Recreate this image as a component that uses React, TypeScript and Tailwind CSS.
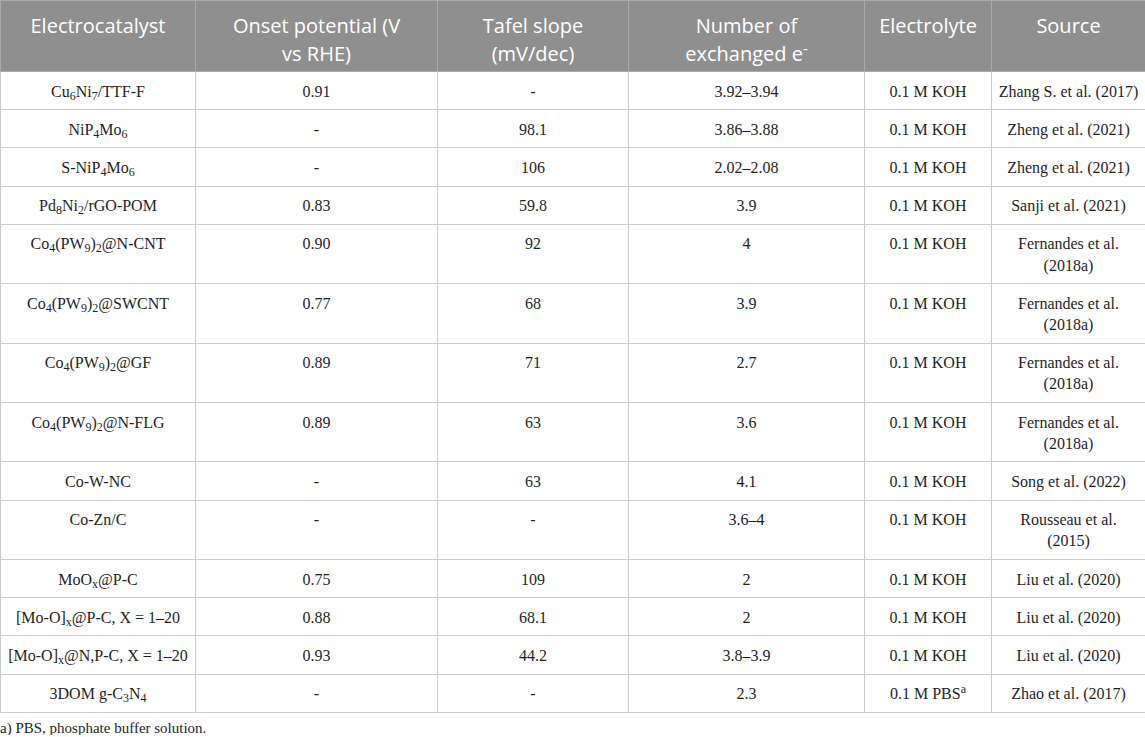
import React from "react";

type Row = {
  cat: React.ReactNode;
  onset: string;
  tafel: string;
  electrons: string;
  electrolyte: React.ReactNode;
  source: React.ReactNode;
};

const fernandes = (
  <>
    Fernandes et al.
    <br />
    (2018a)
  </>
);

const rows: Row[] = [
  { cat: <>Cu<sub>6</sub>Ni<sub>7</sub>/TTF-F</>, onset: "0.91", tafel: "-", electrons: "3.92–3.94", electrolyte: "0.1 M KOH", source: "Zhang S. et al. (2017)" },
  { cat: <>NiP<sub>4</sub>Mo<sub>6</sub></>, onset: "-", tafel: "98.1", electrons: "3.86–3.88", electrolyte: "0.1 M KOH", source: "Zheng et al. (2021)" },
  { cat: <>S-NiP<sub>4</sub>Mo<sub>6</sub></>, onset: "-", tafel: "106", electrons: "2.02–2.08", electrolyte: "0.1 M KOH", source: "Zheng et al. (2021)" },
  { cat: <>Pd<sub>8</sub>Ni<sub>2</sub>/rGO-POM</>, onset: "0.83", tafel: "59.8", electrons: "3.9", electrolyte: "0.1 M KOH", source: "Sanji et al. (2021)" },
  { cat: <>Co<sub>4</sub>(PW<sub>9</sub>)<sub>2</sub>@N-CNT</>, onset: "0.90", tafel: "92", electrons: "4", electrolyte: "0.1 M KOH", source: fernandes },
  { cat: <>Co<sub>4</sub>(PW<sub>9</sub>)<sub>2</sub>@SWCNT</>, onset: "0.77", tafel: "68", electrons: "3.9", electrolyte: "0.1 M KOH", source: fernandes },
  { cat: <>Co<sub>4</sub>(PW<sub>9</sub>)<sub>2</sub>@GF</>, onset: "0.89", tafel: "71", electrons: "2.7", electrolyte: "0.1 M KOH", source: fernandes },
  { cat: <>Co<sub>4</sub>(PW<sub>9</sub>)<sub>2</sub>@N-FLG</>, onset: "0.89", tafel: "63", electrons: "3.6", electrolyte: "0.1 M KOH", source: fernandes },
  { cat: "Co-W-NC", onset: "-", tafel: "63", electrons: "4.1", electrolyte: "0.1 M KOH", source: "Song et al. (2022)" },
  { cat: "Co-Zn/C", onset: "-", tafel: "-", electrons: "3.6–4", electrolyte: "0.1 M KOH", source: <>Rousseau et al.<br />(2015)</> },
  { cat: <>MoO<sub>x</sub>@P-C</>, onset: "0.75", tafel: "109", electrons: "2", electrolyte: "0.1 M KOH", source: "Liu et al. (2020)" },
  { cat: <>[Mo-O]<sub>x</sub>@P-C, X = 1–20</>, onset: "0.88", tafel: "68.1", electrons: "2", electrolyte: "0.1 M KOH", source: "Liu et al. (2020)" },
  { cat: <>[Mo-O]<sub>x</sub>@N,P-C, X = 1–20</>, onset: "0.93", tafel: "44.2", electrons: "3.8–3.9", electrolyte: "0.1 M KOH", source: "Liu et al. (2020)" },
  { cat: <>3DOM g-C<sub>3</sub>N<sub>4</sub></>, onset: "-", tafel: "-", electrons: "2.3", electrolyte: <>0.1 M PBS<sup>a</sup></>, source: "Zhao et al. (2017)" },
];

const th =
  "border border-[#a9a9a9] bg-[#8f8f8f] px-1 pt-[11px] pb-[3px] text-center align-top text-[20px] font-normal leading-[28px] text-white";
const td =
  "border border-[#cbcbcb] px-[2px] pt-[8.5px] pb-[7.5px] text-center align-top whitespace-nowrap leading-[21.2px]";

export default function App() {
  return (
    <div className="w-[1145px] bg-white font-['Liberation_Serif','Times_New_Roman',serif] text-[16px] text-[#1f1f1f]">
      <table className="w-full table-fixed border-collapse">
        <colgroup>
          <col className="w-[195px]" />
          <col className="w-[242px]" />
          <col className="w-[191px]" />
          <col className="w-[236px]" />
          <col className="w-[127px]" />
          <col className="w-[154px]" />
        </colgroup>
        <thead className="font-['Open_Sans','Noto_Sans',sans-serif]">
          <tr>
            <th className={th}>Electrocatalyst</th>
            <th className={th}>
              Onset potential (V
              <br />
              vs RHE)
            </th>
            <th className={th}>
              Tafel slope
              <br />
              (mV/dec)
            </th>
            <th className={th}>
              Number of
              <br />
              exchanged e<sup>-</sup>
            </th>
            <th className={th}>Electrolyte</th>
            <th className={th}>Source</th>
          </tr>
        </thead>
        <tbody>
          {rows.map((r, i) => (
            <tr key={i}>
              <td className={td}>{r.cat}</td>
              <td className={td}>{r.onset}</td>
              <td className={td}>{r.tafel}</td>
              <td className={td}>{r.electrons}</td>
              <td className={td}>{r.electrolyte}</td>
              <td className={td}>{r.source}</td>
            </tr>
          ))}
        </tbody>
      </table>
      <p className="mt-[8px] text-[15px] leading-[14px]">a) PBS, phosphate buffer solution.</p>
    </div>
  );
}
